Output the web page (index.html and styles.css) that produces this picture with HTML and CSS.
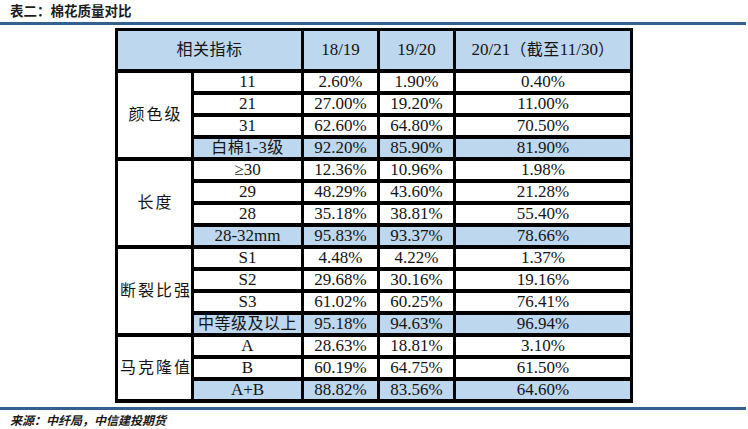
FILE: index.html
```html
<!DOCTYPE html>
<html lang="zh-CN">
<head>
<meta charset="utf-8">
<title>表二：棉花质量对比</title>
<link rel="stylesheet" href="styles.css">
</head>
<body>
<div class="page">
  <h1 class="title">表二：棉花质量对比</h1>
  <div class="rule"></div>
  <div class="table-wrap">
    <table class="quality">
      <colgroup>
        <col class="c1"><col class="c2"><col class="c3"><col class="c4"><col class="c5">
      </colgroup>
      <thead>
        <tr>
          <th colspan="2" class="label">相关指标</th>
          <th>18/19</th>
          <th>19/20</th>
          <th>20/21<span class="cjk">（截至</span>11/30<span class="cjk">）</span></th>
        </tr>
      </thead>
      <tbody>
        <tr><td rowspan="4" class="group">颜色级</td><td>11</td><td>2.60%</td><td>1.90%</td><td>0.40%</td></tr>
        <tr><td>21</td><td>27.00%</td><td>19.20%</td><td>11.00%</td></tr>
        <tr><td>31</td><td>62.60%</td><td>64.80%</td><td>70.50%</td></tr>
        <tr class="sum"><td class="label">白棉1-3级</td><td>92.20%</td><td>85.90%</td><td>81.90%</td></tr>

        <tr><td rowspan="4" class="group">长度</td><td>≥30</td><td>12.36%</td><td>10.96%</td><td>1.98%</td></tr>
        <tr><td>29</td><td>48.29%</td><td>43.60%</td><td>21.28%</td></tr>
        <tr><td>28</td><td>35.18%</td><td>38.81%</td><td>55.40%</td></tr>
        <tr class="sum"><td>28-32mm</td><td>95.83%</td><td>93.37%</td><td>78.66%</td></tr>

        <tr><td rowspan="4" class="group">断裂比强</td><td>S1</td><td>4.48%</td><td>4.22%</td><td>1.37%</td></tr>
        <tr><td>S2</td><td>29.68%</td><td>30.16%</td><td>19.16%</td></tr>
        <tr><td>S3</td><td>61.02%</td><td>60.25%</td><td>76.41%</td></tr>
        <tr class="sum"><td class="label">中等级及以上</td><td>95.18%</td><td>94.63%</td><td>96.94%</td></tr>

        <tr><td rowspan="3" class="group">马克隆值</td><td>A</td><td>28.63%</td><td>18.81%</td><td>3.10%</td></tr>
        <tr><td>B</td><td>60.19%</td><td>64.75%</td><td>61.50%</td></tr>
        <tr class="sum"><td>A+B</td><td>88.82%</td><td>83.56%</td><td>64.60%</td></tr>
      </tbody>
    </table>
  </div>
  <div class="rule rule-bottom"></div>
  <p class="source">来源：中纤局，中信建投期货</p>
</div>
</body>
</html>
```

FILE: styles.css
```css
html, body {
  margin: 0;
  padding: 0;
  background: #ffffff;
}

.page {
  width: 748px;
  height: 429px;
  overflow: hidden;
}

.title {
  margin: 0;
  padding-left: 10px;
  height: 22px;
  line-height: 21px;
  font-family: "Noto Sans CJK SC", sans-serif;
  font-size: 13.5px;
  font-weight: 700;
  color: #1c1c1c;
}

.rule {
  width: 746px;
  height: 3px;
  background: #34608f;
}

.table-wrap {
  padding: 3px 0 0 115px;
}

.quality {
  border-collapse: separate;
  border-spacing: 0;
  border-left: 3px solid #000;
  border-top: 3px solid #000;
  table-layout: fixed;
  width: 518px;
  font-family: "Liberation Serif", "Noto Sans CJK SC", serif;
  font-size: 17px;
  color: #141414;
}

.c1 { width: 76px; }
.c2 { width: 110px; }
.c3 { width: 76px; }
.c4 { width: 76px; }
.c5 { width: 177px; }

.quality th,
.quality td {
  padding: 0;
  border-right: 3px solid #000;
  border-bottom: 4px solid #000;
  text-align: center;
  vertical-align: middle;
  white-space: nowrap;
  line-height: 18px;
}

.quality th {
  height: 38px;
  background: #bdd7ee;
  font-weight: 400;
}

.quality tbody tr {
  height: 21.87px;
}

.quality tr.sum td {
  background: #bdd7ee;
}

.quality td.group {
  background: #ffffff;
  font-size: 16px;
  letter-spacing: 2px;
  padding-left: 2px;
}

.label,
.cjk {
  font-size: 16px;
  letter-spacing: 0.5px;
}

.rule-bottom {
  margin-top: 4px;
}

.source {
  margin: 0;
  padding-left: 10px;
  line-height: 20px;
  font-family: "Noto Sans CJK SC", sans-serif;
  font-size: 12px;
  font-style: italic;
  font-weight: 700;
  color: #1c1c1c;
}
```
